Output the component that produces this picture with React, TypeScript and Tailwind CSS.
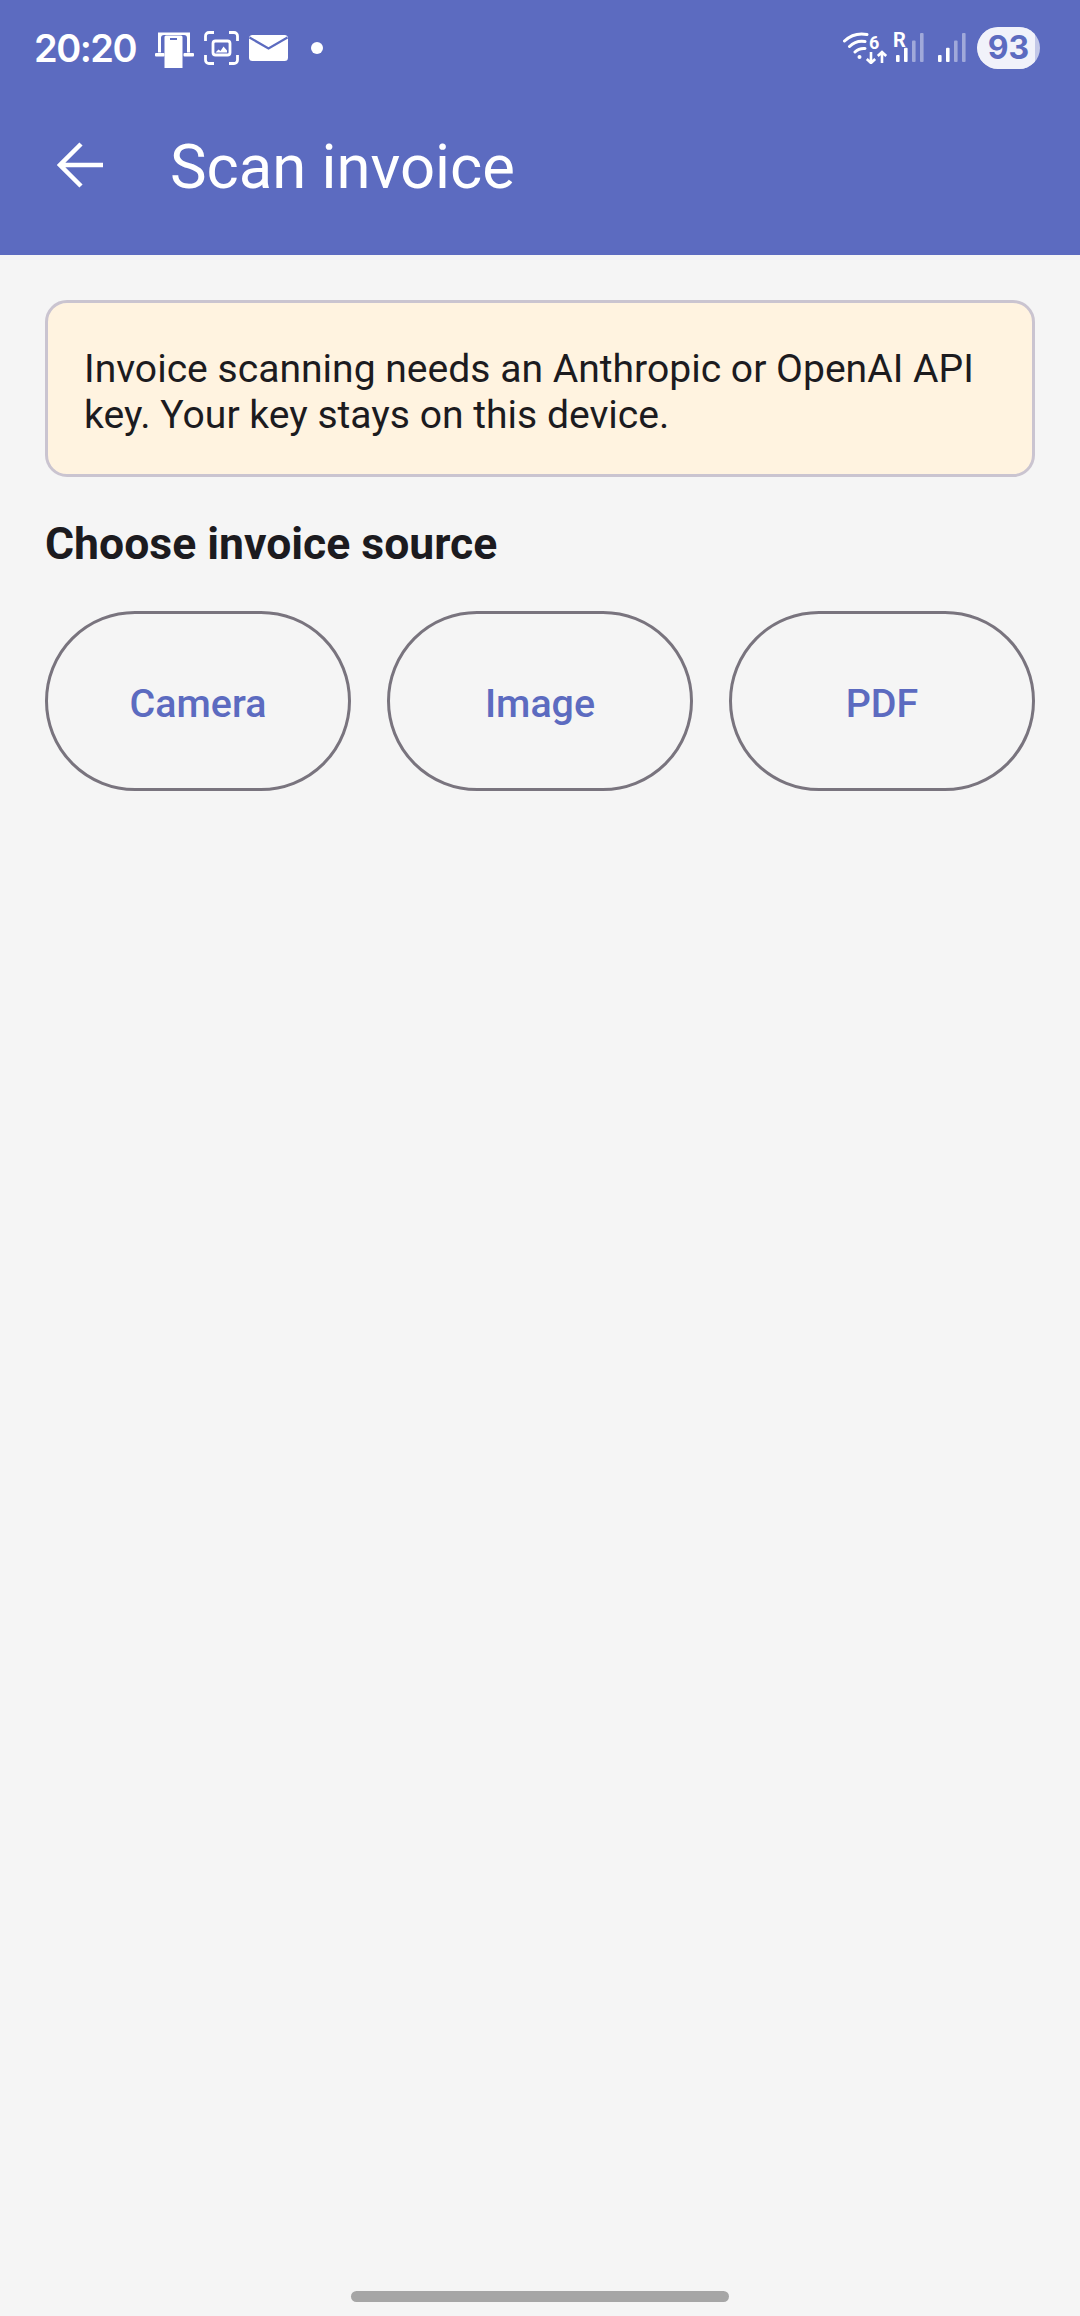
const Notifications = () => (
  <div className="flex items-center">
    {/* phone casting */}
    <svg width="39" height="36" viewBox="0 0 39 36" className="mt-[5px]" fill="#fff">
      <path d="M3 .5h32v20h-3V6q0-3-3-3H9Q6 3 6 6v14.500H3z" />
      <rect x="0" y="21" width="9.500" height="3.500" rx="1" />
      <rect x="28.500" y="21" width="10.500" height="3.500" rx="1" />
      <path d="M11 3.500h15a1.500 1.500 0 0 1 1.500 1.500v31H9.500V5A1.500 1.500 0 0 1 11 3.500z" />
      <rect x="15" y="6" width="7" height="2" fill="#5c6bc0" />
    </svg>
    {/* screenshot frame */}
    <svg width="35" height="34" viewBox="0 0 35 34" className="ml-[10px]" fill="none" stroke="#fff" strokeWidth="2.800">
      <path d="M10 1.500H5A3.500 3.500 0 0 0 1.500 5v5M25 1.500h5A3.500 3.500 0 0 1 33.500 5v5M10 32.500H5A3.500 3.500 0 0 1 1.500 29v-5M25 32.500h5a3.500 3.500 0 0 0 3.500-3.500v-5" />
      <rect x="9" y="10" width="17" height="14" rx="2.500" />
      <path d="M11.500 21.500l3-3 2 1.500 3-4.500 3.500 4v2z" fill="#fff" stroke="none" />
    </svg>
    {/* mail */}
    <svg width="39" height="26" viewBox="0 0 39 26" className="ml-[10px]">
      <rect width="39" height="26" rx="3.500" fill="#fff" />
      <path d="M0.500 2.500 19.500 13.500 38.500 2.500" fill="none" stroke="#5c6bc0" strokeWidth="2.200" />
    </svg>
    <div className="ml-[23px] h-3 w-3 rounded-full bg-white" />
  </div>
);

const SignalBars = ({ active }: { active: number }) => (
  <svg width="28" height="30" viewBox="0 0 28 30">
    {[0, 1, 2, 3].map((i) => (
      <rect
        key={i}
        x={i * 8}
        y={22 - i * 7.300}
        width="3.600"
        height={7 + i * 7.300}
        rx="1"
        fill="#fff"
        fillOpacity={i < active ? 1 : 0.42}
      />
    ))}
  </svg>
);

const SystemIcons = () => (
  <div className="flex items-center">
    {/* wifi 6 with arrows */}
    <div className="relative h-[32px] w-[45px]">
      <svg width="45" height="32" viewBox="0 0 45 32" fill="none" stroke="#fff" strokeWidth="3" strokeLinecap="round">
        <path d="M1.500 9Q11 0 24 2.500M6.500 14.500Q13 8 22 9.500M12 20Q16 16 22 16.500" />
        <circle cx="16.500" cy="25" r="2" fill="#fff" stroke="none" />
        <path d="M28 20v11M23.800 27l4.200 4 4.200-4M39 31V20M34.800 24l4.200-4 4.200 4" strokeWidth="2.600" strokeLinecap="butt" />
      </svg>
      <span className="absolute top-[2px] left-[26px] font-['Roboto',sans-serif] text-[18px] leading-[18px] font-bold text-white">6</span>
    </div>
    <div className="relative ml-[8px] h-[30px] w-[28px]">
      <span className="absolute top-[-3px] left-[-3px] font-['Roboto',sans-serif] text-[20px] leading-[20px] font-bold text-white">R</span>
      <SignalBars active={2} />
    </div>
    <div className="ml-[14px]">
      <SignalBars active={2} />
    </div>
    {/* battery */}
    <div className="relative ml-[11px] flex h-[42px] w-[63px] items-center justify-center overflow-hidden rounded-full bg-[#c3c8e8]">
      <div className="absolute inset-y-0 left-0 w-[58px] rounded-l-full bg-[#f1f2fa]" />
      <span className="relative font-['Inter',sans-serif] text-[32px] leading-none font-bold text-[#5c6bc0]">93</span>
    </div>
  </div>
);

export default function App() {
  return (
    <div className="relative flex h-[2316px] w-[1080px] flex-col overflow-hidden bg-[#f5f5f5] font-['Roboto',sans-serif]">
      <header className="h-[255px] bg-[#5c6bc0] text-white">
        <div className="flex h-[95px] items-center justify-between pr-[40px] pl-[34px]">
          <div className="flex items-center">
            <span className="w-[121px] font-['Inter',sans-serif] text-[38px] leading-none font-semibold tracking-[-1.500px]">20:20</span>
            <Notifications />
          </div>
          <SystemIcons />
        </div>
        <div className="flex h-[140px] items-center pl-[57px]">
          <svg width="46" height="46" viewBox="0 0 46 46" fill="none" stroke="#fff" strokeWidth="4.500">
            <path d="M46 23H3M24 2 3 23l21 21" />
          </svg>
          <h1 className="mt-[5px] ml-[67px] text-[61.600px] leading-none font-normal">Scan invoice</h1>
        </div>
      </header>

      <main className="flex flex-col px-[45px] pt-[45px]">
        <div className="h-[177px] rounded-[22px] border-[3px] border-[#cac4d0] bg-[#fff3e0] px-[36px] pt-[43px] text-[39.100px] leading-[46px] text-[#1c1b1f]">
          Invoice scanning needs an Anthropic or OpenAI API key. Your key stays on this device.
        </div>
        <h2 className="mt-[41px] text-[44.500px] leading-[52px] font-bold text-[#1c1b1f]">Choose invoice source</h2>
        <div className="mt-[41px] flex gap-[36px]">
          {["Camera", "Image", "PDF"].map((label) => (
            <button
              key={label}
              className="flex h-[180px] flex-1 items-center justify-center rounded-full border-[3px] border-[#79747e] pt-[5px] text-[39.400px] font-medium text-[#5c6bc0]"
            >
              {label}
            </button>
          ))}
        </div>
      </main>

      <div className="absolute bottom-[14px] left-[351px] h-[11px] w-[378px] rounded-full bg-[#a6a6a6]" />
    </div>
  );
}
